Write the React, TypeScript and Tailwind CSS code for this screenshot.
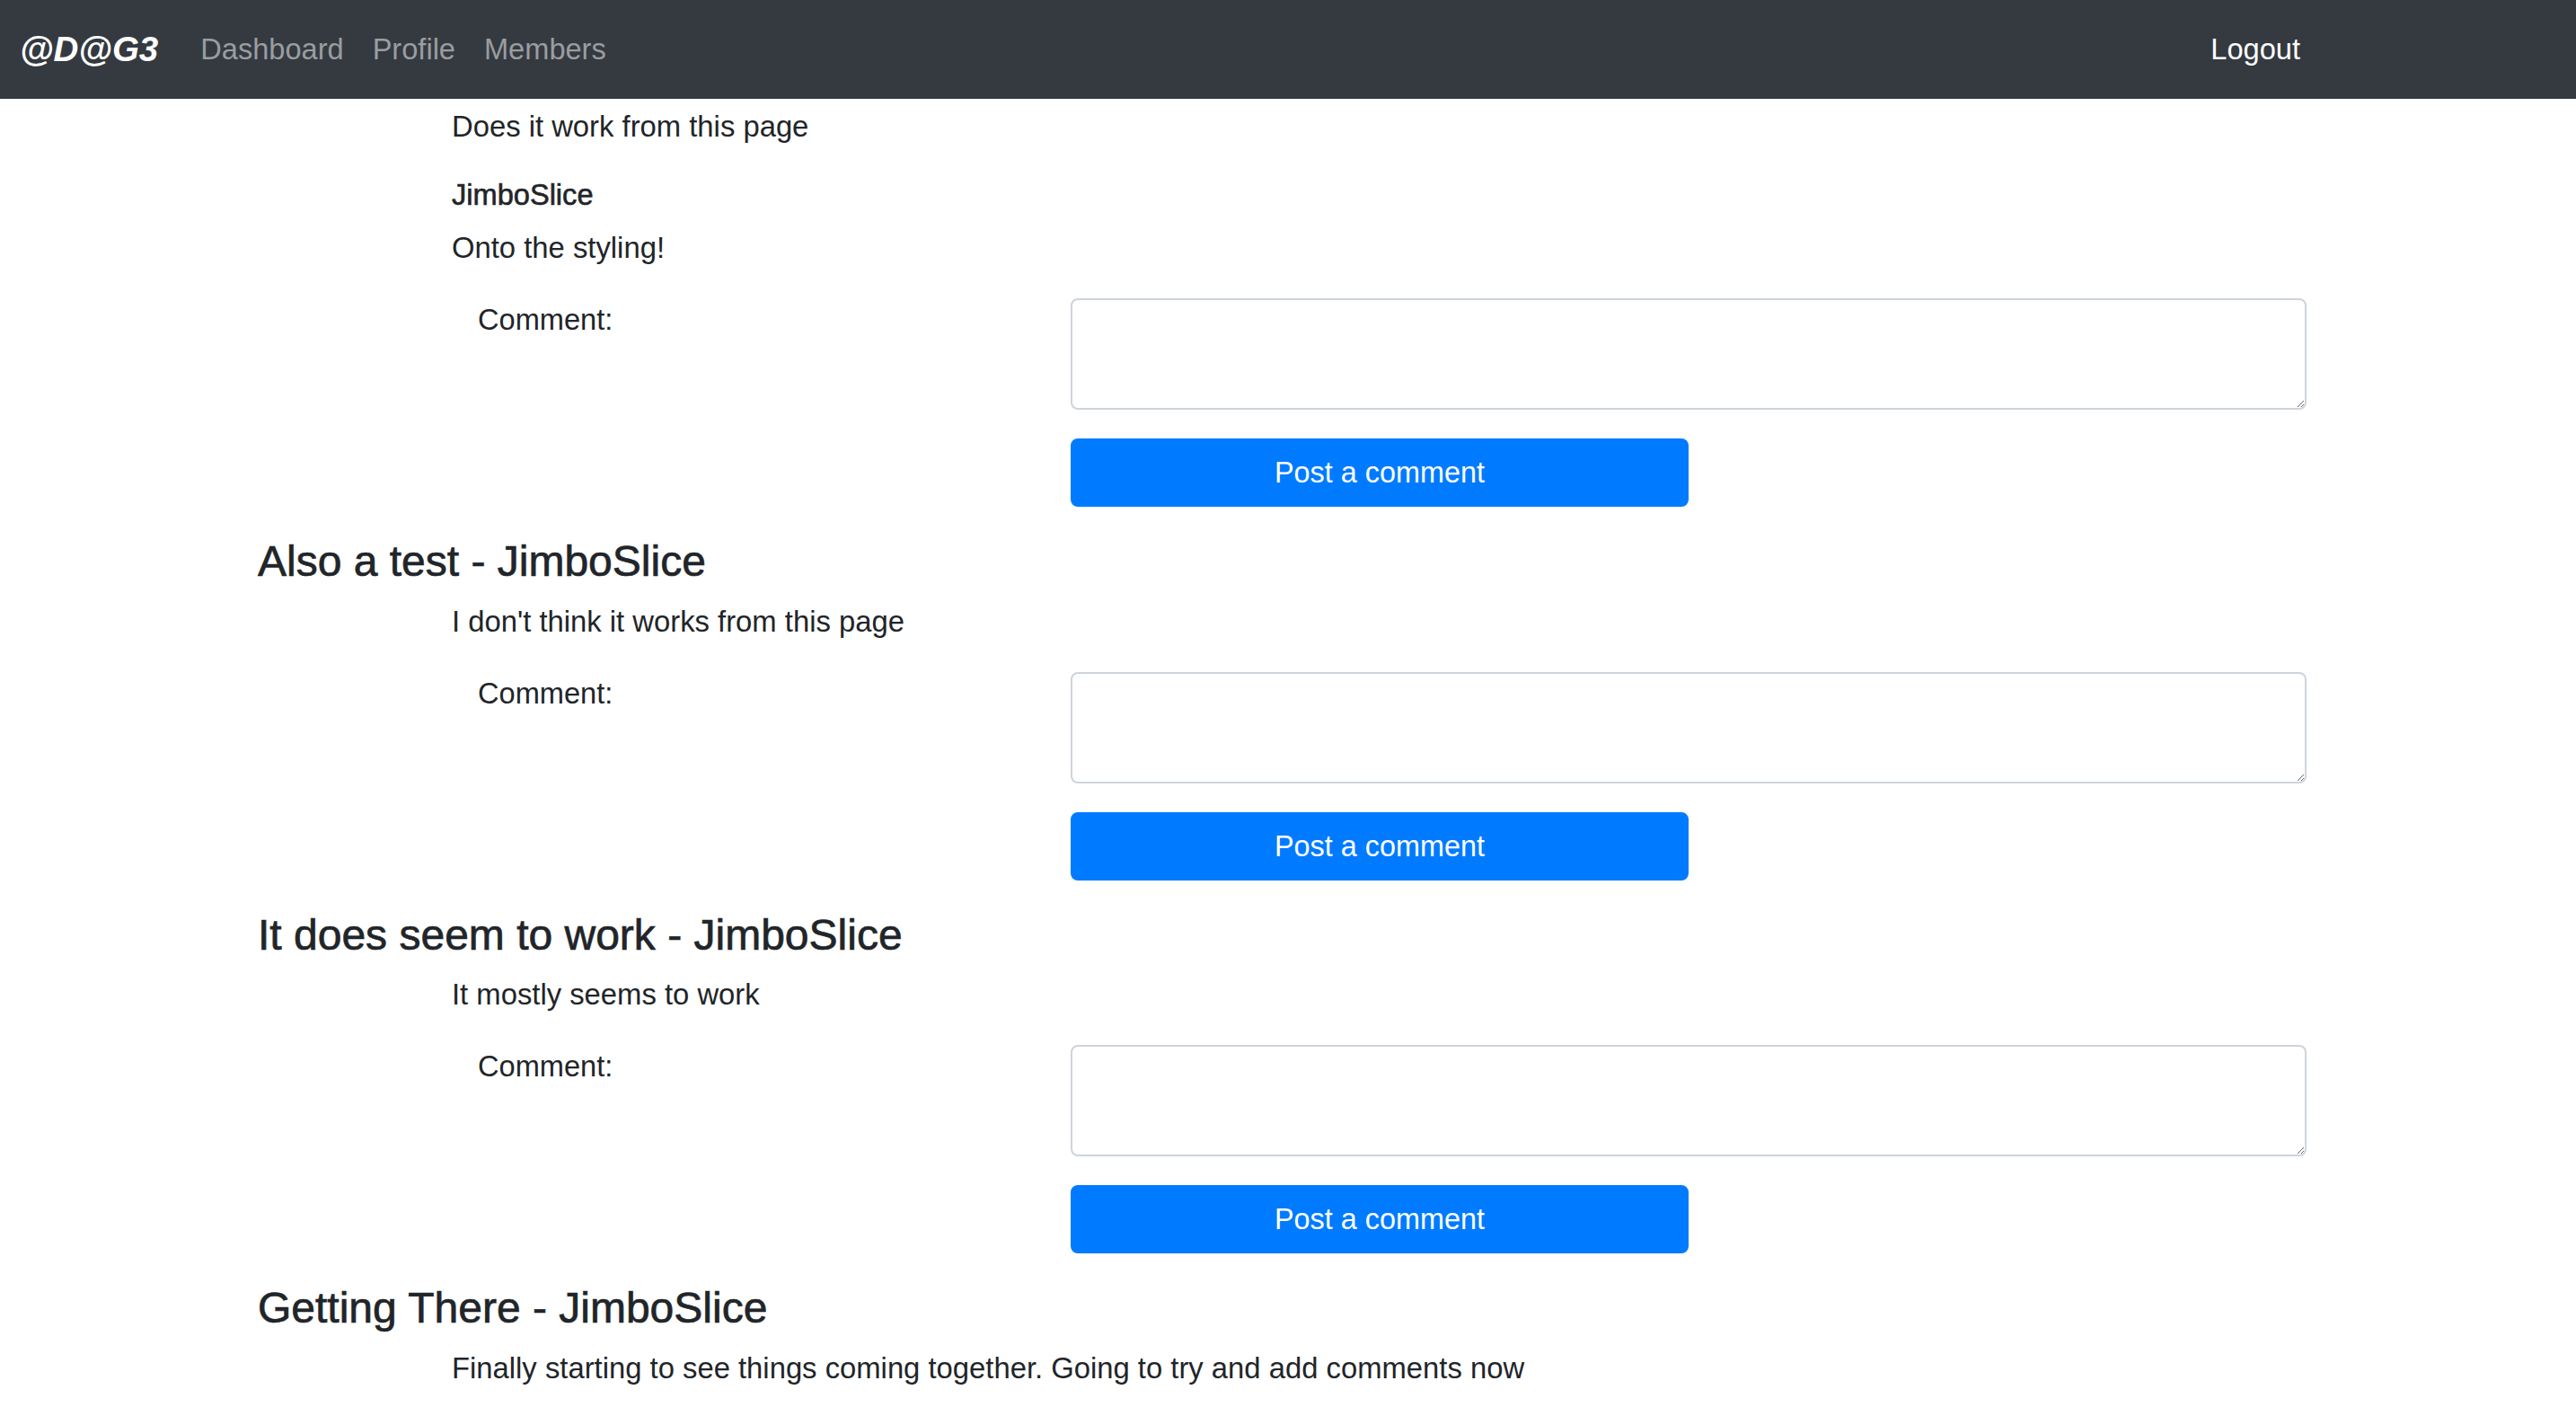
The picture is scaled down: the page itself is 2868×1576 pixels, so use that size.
import React from 'react'

type Post = {
  title: string
  author: string
  body: string
}

const posts: Post[] = [
  { title: 'Also a test', author: 'JimboSlice', body: "I don't think it works from this page" },
  { title: 'It does seem to work', author: 'JimboSlice', body: 'It mostly seems to work' },
]

function CommentForm() {
  return (
    <form className="mb-8 flex" onSubmit={e => e.preventDefault()}>
      <label className="w-[905px] shrink-0 pl-[245px] text-[32.6px] leading-[48px]">
        Comment:
      </label>
      <div className="flex w-[1376px] flex-col gap-8">
        <textarea
          rows={2}
          className="h-[124px] w-full rounded-lg border-2 border-[#ced4da] px-6 py-3 text-[32px] leading-[48px] outline-none"
        />
        <button
          type="submit"
          className="w-[688px] rounded-lg border-2 border-[#007bff] bg-[#007bff] py-3 text-[32.4px] leading-[48px] text-white"
        >
          Post a comment
        </button>
      </div>
    </form>
  )
}

function PostBlock({ post }: { post: Post }) {
  return (
    <section>
      <h4 className="mb-[14px] text-[48px] font-medium leading-[1.2] [-webkit-text-stroke:0.7px_#212529]">
        {post.title} - {post.author}
      </h4>
      <p className="mb-8 ml-[216px] text-[32.8px] leading-[48px]">{post.body}</p>
      <CommentForm />
    </section>
  )
}

export default function App() {
  return (
    <div className="min-h-screen bg-white font-['Liberation_Sans',Arial,sans-serif] text-[#212529]">
      <nav className="flex h-[110px] items-center bg-[#343a40] pl-[22px] pr-[291px]">
        <a href="#" className="mr-[31px] text-[38.5px] font-bold italic text-white">
          @D@G3
        </a>
        <ul className="flex">
          {['Dashboard', 'Profile', 'Members'].map(link => (
            <li key={link}>
              <a href="#" className="px-4 text-[32.6px] text-[#9a9da0]">
                {link}
              </a>
            </li>
          ))}
        </ul>
        <a href="#" className="ml-auto px-4 text-[32.6px] text-white">
          Logout
        </a>
      </nav>

      <main className="pl-[287px] pt-[7px]">
        <div>
          <p className="mb-8 ml-[216px] text-[32.8px] leading-[48px]">Does it work from this page</p>
          <h6 className="mb-4 ml-[216px] text-[32.6px] font-medium leading-[1.2] [-webkit-text-stroke:0.6px_#212529]">
            JimboSlice
          </h6>
          <p className="mb-8 ml-[216px] text-[32.8px] leading-[48px]">Onto the styling!</p>
          <CommentForm />
        </div>

        {posts.map(post => (
          <PostBlock key={post.title} post={post} />
        ))}

        <section>
          <h4 className="mb-[14px] text-[48px] font-medium leading-[1.2] [-webkit-text-stroke:0.7px_#212529]">
            Getting There - JimboSlice
          </h4>
          <p className="ml-[216px] text-[32.8px] leading-[48px]">
            Finally starting to see things coming together. Going to try and add comments now
          </p>
        </section>
      </main>
    </div>
  )
}
